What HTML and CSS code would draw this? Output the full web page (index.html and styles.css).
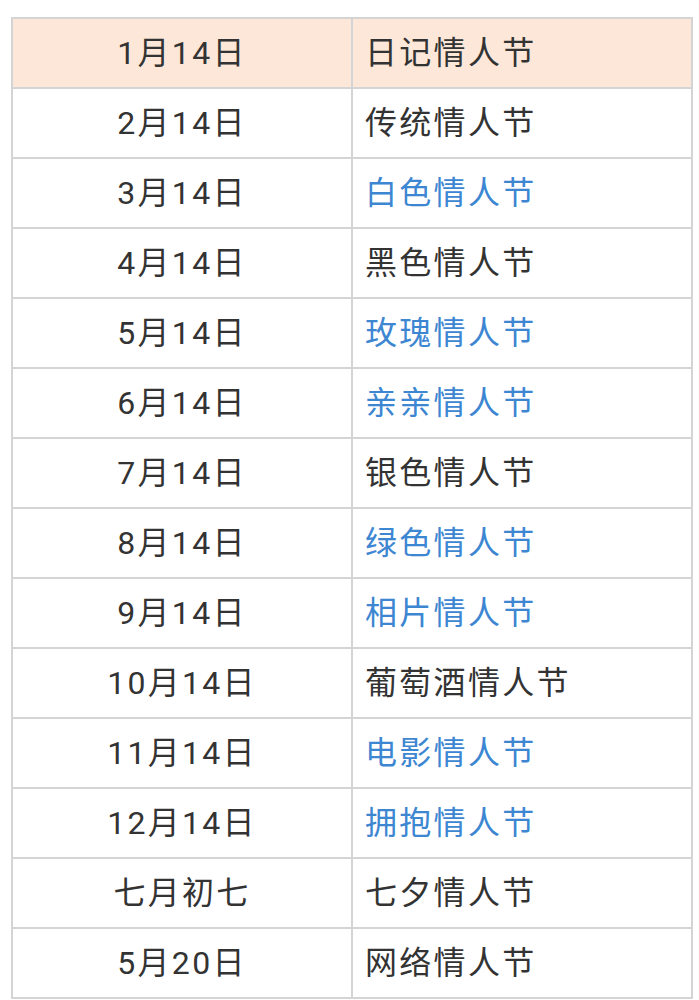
FILE: index.html
```html
<!DOCTYPE html>
<html lang="zh-CN">
<head>
<meta charset="utf-8">
<link rel="stylesheet" href="styles.css">
</head>
<body>
<table class="tbl">
  <tbody>
    <tr class="head"><td class="date">1月14日</td><td class="name">日记情人节</td></tr>
    <tr><td class="date">2月14日</td><td class="name">传统情人节</td></tr>
    <tr><td class="date">3月14日</td><td class="name link">白色情人节</td></tr>
    <tr><td class="date">4月14日</td><td class="name">黑色情人节</td></tr>
    <tr><td class="date">5月14日</td><td class="name link">玫瑰情人节</td></tr>
    <tr><td class="date">6月14日</td><td class="name link">亲亲情人节</td></tr>
    <tr><td class="date">7月14日</td><td class="name">银色情人节</td></tr>
    <tr><td class="date">8月14日</td><td class="name link">绿色情人节</td></tr>
    <tr><td class="date">9月14日</td><td class="name link">相片情人节</td></tr>
    <tr><td class="date">10月14日</td><td class="name">葡萄酒情人节</td></tr>
    <tr><td class="date">11月14日</td><td class="name link">电影情人节</td></tr>
    <tr><td class="date">12月14日</td><td class="name link">拥抱情人节</td></tr>
    <tr><td class="date">七月初七</td><td class="name">七夕情人节</td></tr>
    <tr><td class="date">5月20日</td><td class="name">网络情人节</td></tr>
  </tbody>
</table>
</body>
</html>
```
FILE: styles.css
```css
html, body {
  margin: 0;
  padding: 0;
  background: #ffffff;
}
body {
  padding: 17px 6px 0 11px;
  font-family: Roboto, "Noto Sans CJK SC", sans-serif;
  color: #333333;
}
.tbl {
  width: 682px;
  border-collapse: collapse;
  table-layout: fixed;
}
.tbl td {
  height: 67px;
  padding: 0 0 1px 0;
  border: 2px solid #d4d4d4;
  font-size: 32px;
  letter-spacing: 2.3px;
  line-height: 1;
  vertical-align: middle;
}
.tbl td.date {
  width: 338px;
  text-align: center;
}
.tbl td.name {
  padding-left: 12px;
  text-align: left;
}
.tbl tr.head td {
  background: #fce7d9;
}
.tbl td.link {
  color: #3d86d2;
}
```
